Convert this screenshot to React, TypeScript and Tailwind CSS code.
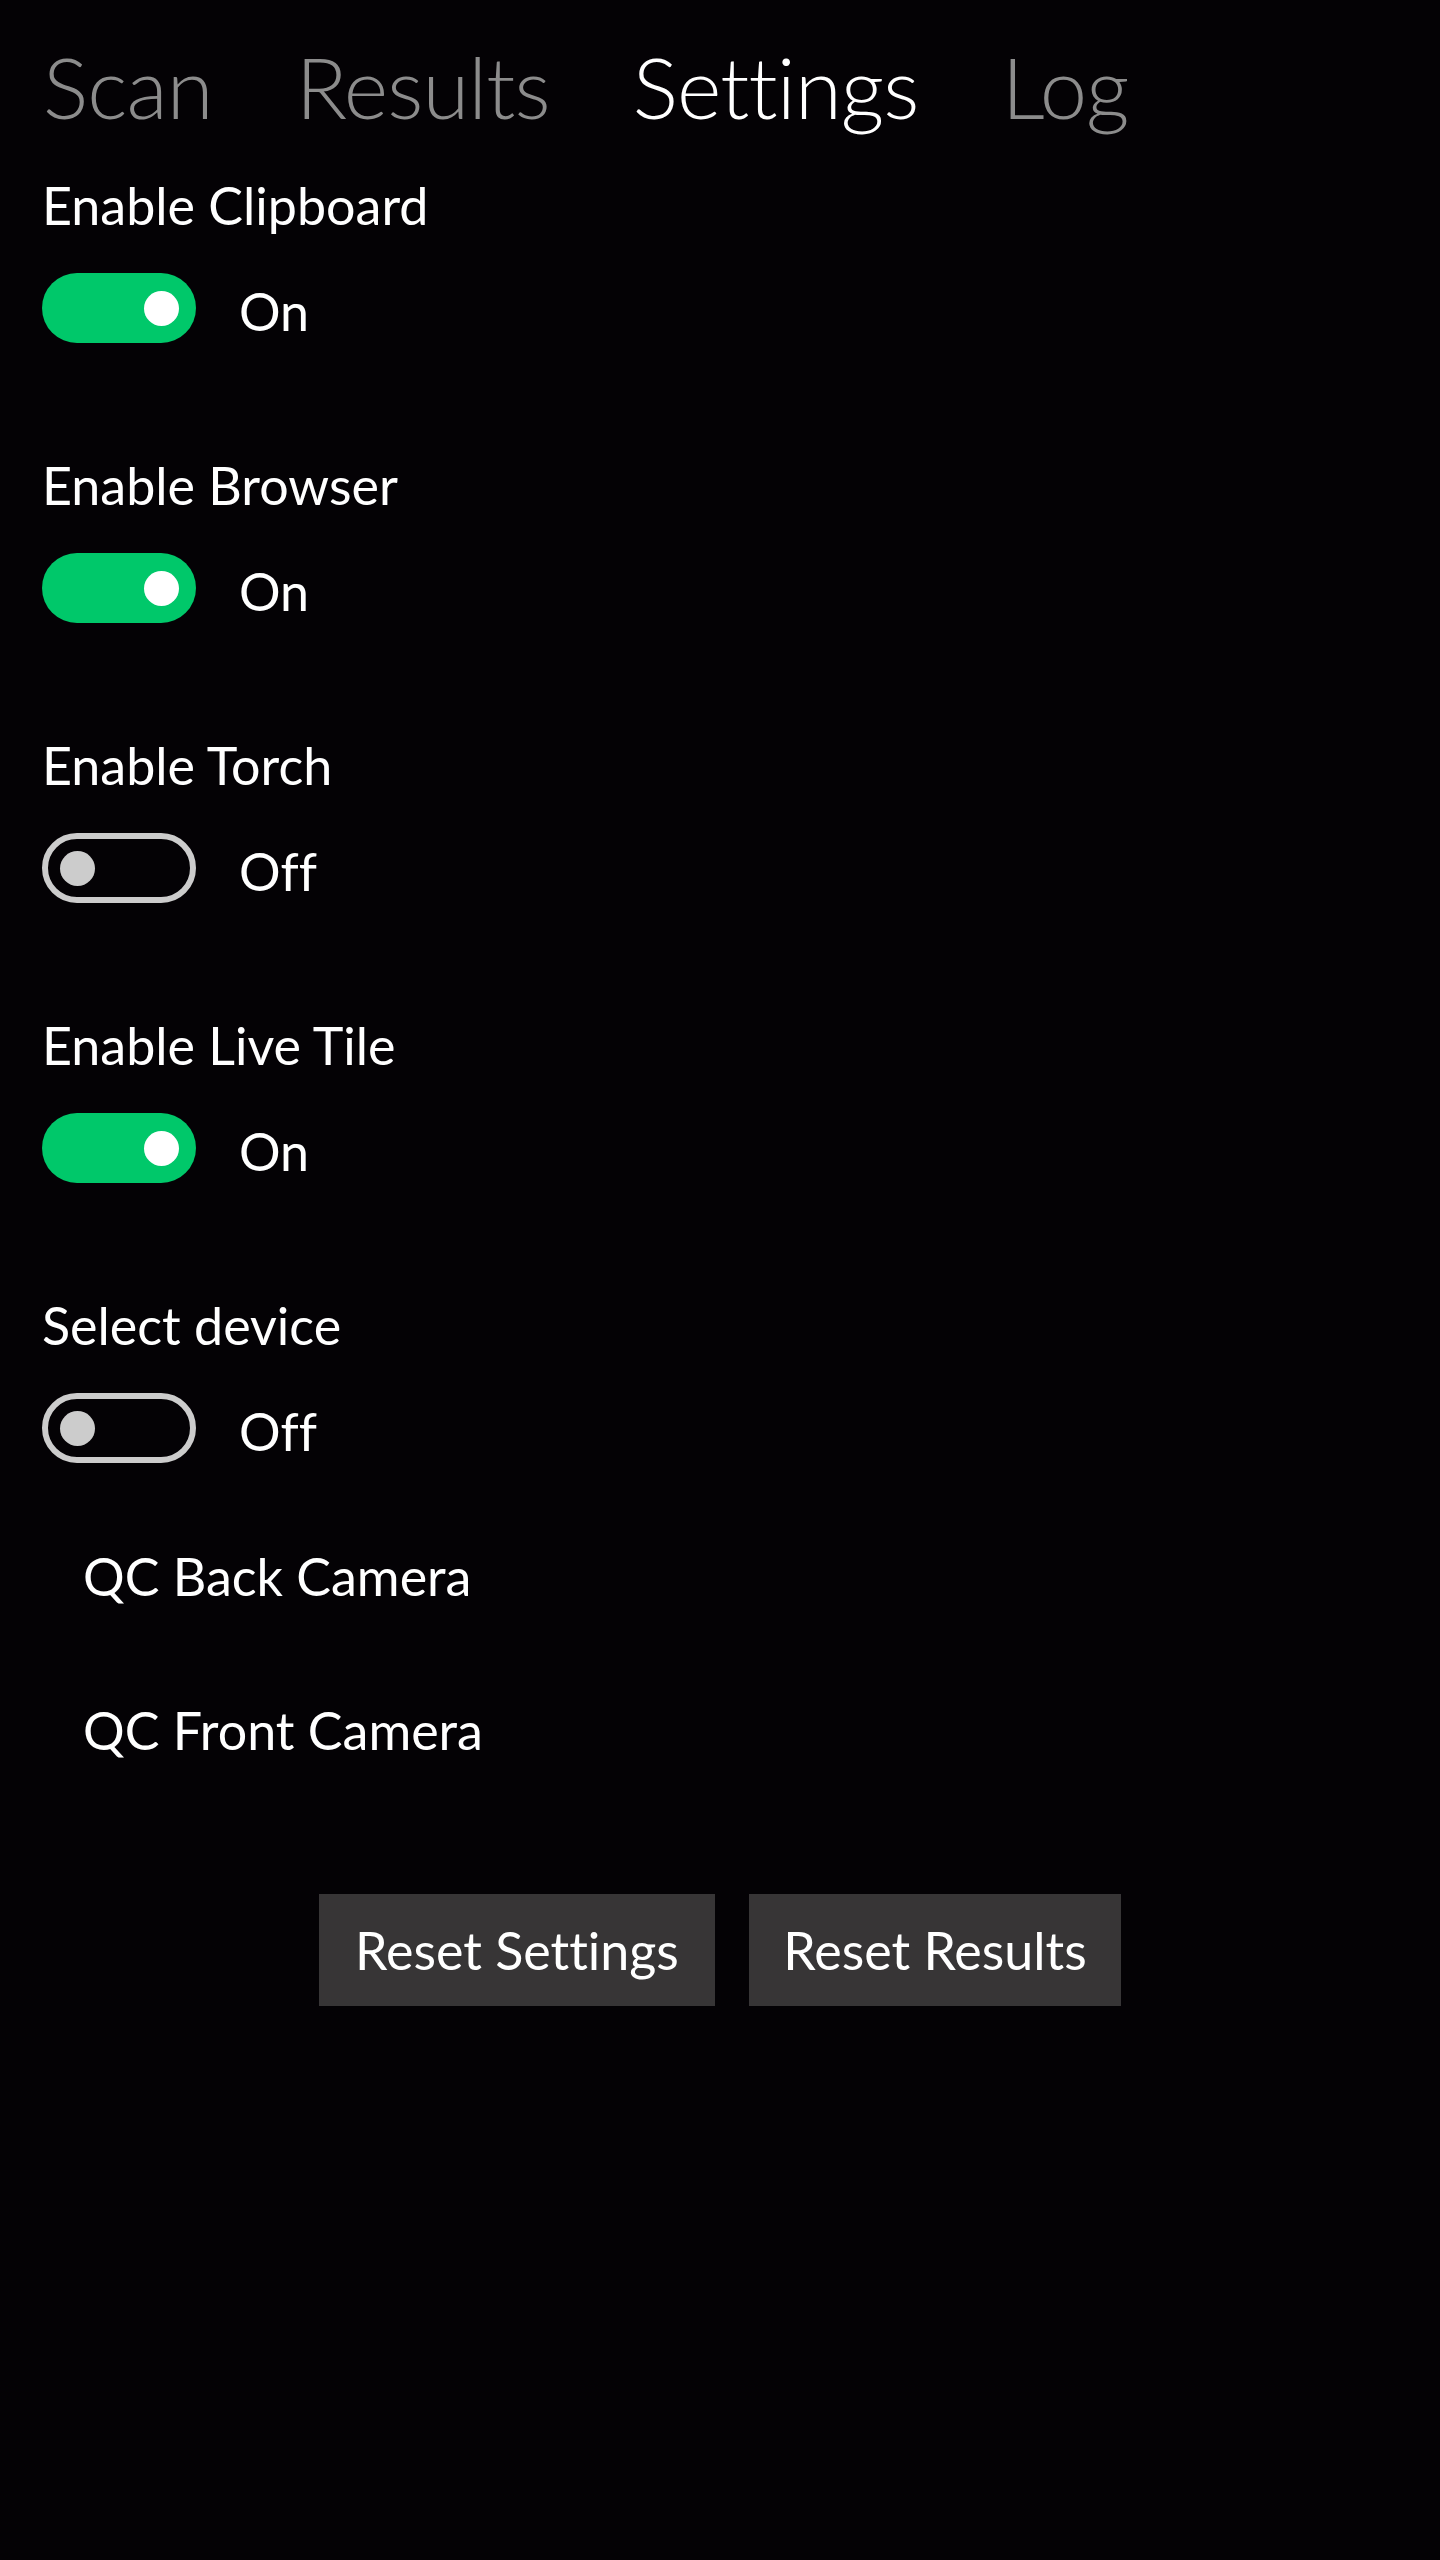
import { useState } from 'react';

type Tab = 'Scan' | 'Results' | 'Settings' | 'Log';

const tabs: Tab[] = ['Scan', 'Results', 'Settings', 'Log'];

function Toggle({ on, onChange }: { on: boolean; onChange: () => void }) {
  return (
    <button
      onClick={onChange}
      className="flex h-[70px] items-center gap-[43px] text-left"
    >
      {on ? (
        <span className="flex h-[70px] w-[154px] items-center justify-end rounded-full bg-[#00c86a] pr-[17px]">
          <span className="h-[35px] w-[35px] rounded-full bg-white" />
        </span>
      ) : (
        <span className="flex h-[70px] w-[154px] items-center rounded-full border-[6px] border-[#cccccc] pl-[12px]">
          <span className="h-[35px] w-[35px] rounded-full bg-[#cccccc]" />
        </span>
      )}
      <span className="mt-[6px] text-[52px] leading-[62px] text-white">{on ? 'On' : 'Off'}</span>
    </button>
  );
}

function Setting({ label, on, onChange }: { label: string; on: boolean; onChange: () => void }) {
  return (
    <div>
      <div className="text-[52px] leading-[62px]">{label}</div>
      <div className="mt-[37px]">
        <Toggle on={on} onChange={onChange} />
      </div>
    </div>
  );
}

export default function App() {
  const [active, setActive] = useState<Tab>('Settings');
  const [clipboard, setClipboard] = useState(true);
  const [browser, setBrowser] = useState(true);
  const [torch, setTorch] = useState(false);
  const [liveTile, setLiveTile] = useState(true);
  const [selectDevice, setSelectDevice] = useState(false);

  return (
    <div className="min-h-[2560px] w-full bg-[#040205] font-['Lato','Open_Sans',sans-serif] text-white [font-variant-ligatures:none]">
      {/* Pivot header */}
      <nav className="flex gap-[83px] pl-[43px] pt-[35px]">
        {tabs.map((t) => (
          <button
            key={t}
            onClick={() => setActive(t)}
            className={
              'text-[85px] leading-[102px] font-light tracking-[-0.01em] ' +
              (active === t ? 'text-white' : 'text-[#8c8c8c]')
            }
          >
            {t}
          </button>
        ))}
      </nav>

      <div className="mt-[37px] pl-[42px]">
        <div className="flex flex-col gap-[111px]">
          <Setting label="Enable Clipboard" on={clipboard} onChange={() => setClipboard(!clipboard)} />
          <Setting label="Enable Browser" on={browser} onChange={() => setBrowser(!browser)} />
          <Setting label="Enable Torch" on={torch} onChange={() => setTorch(!torch)} />
          <Setting label="Enable Live Tile" on={liveTile} onChange={() => setLiveTile(!liveTile)} />
          <Setting label="Select device" on={selectDevice} onChange={() => setSelectDevice(!selectDevice)} />
        </div>

        {/* Camera list */}
        <ul className="mt-[36px]">
          {['QC Back Camera', 'QC Front Camera'].map((c) => (
            <li key={c} className="flex h-[154px] items-center pl-[41px] text-[52px] leading-[62px]">
              {c}
            </li>
          ))}
        </ul>
      </div>

      <div className="mt-[87px] flex justify-center gap-[34px]">
        <button className="h-[112px] w-[396px] bg-[#373536] text-[52px] leading-[62px] text-white">
          Reset Settings
        </button>
        <button className="h-[112px] w-[372px] bg-[#373536] text-[52px] leading-[62px] text-white">
          Reset Results
        </button>
      </div>
    </div>
  );
}
